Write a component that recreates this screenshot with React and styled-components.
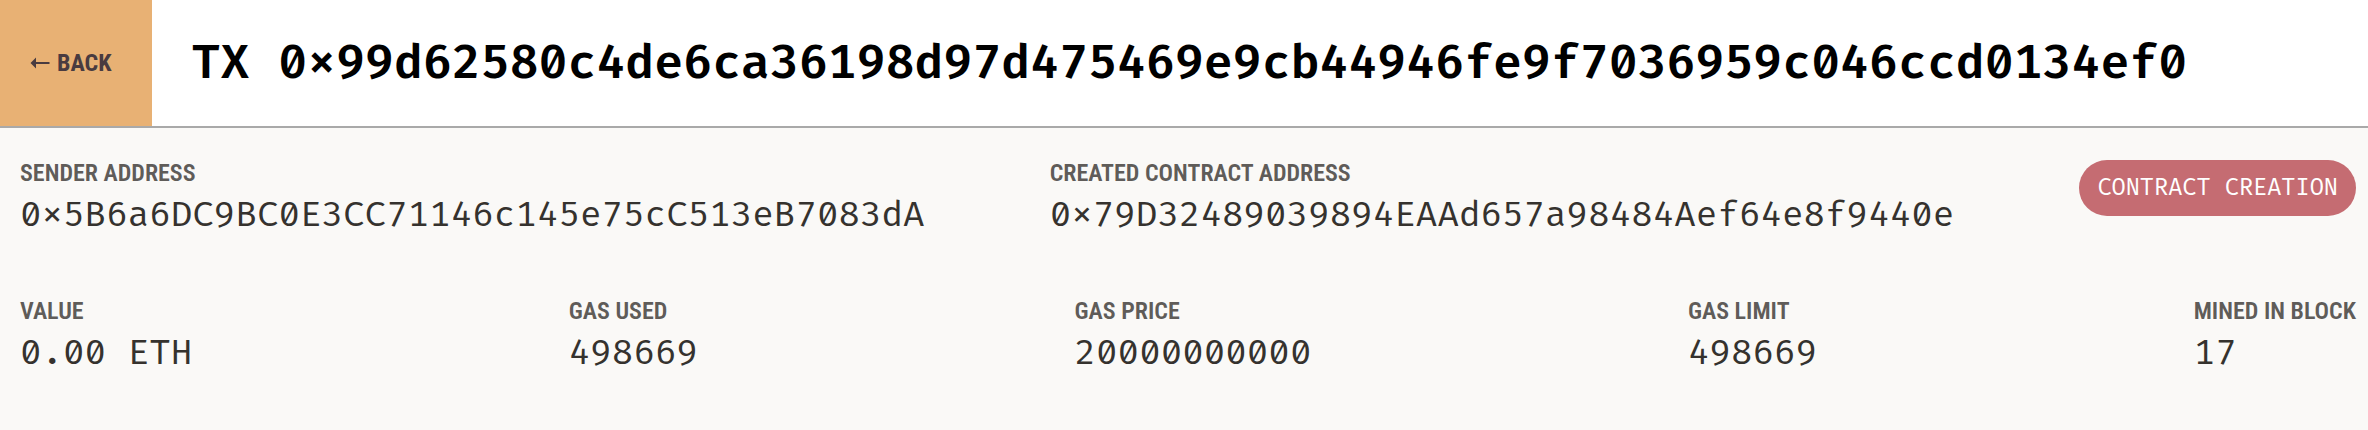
import React from "react";
import styled, { createGlobalStyle } from "styled-components";

const mono = `"Fira Code", "Liberation Mono", monospace`;
const condensed = `"Roboto Condensed", "Liberation Sans Narrow", Roboto, sans-serif`;

const GlobalStyle = createGlobalStyle`
  *, *::before, *::after { box-sizing: border-box; }
  body {
    margin: 0;
    min-height: 100vh;
    background: #faf9f7;
    color: #35322e;
    font-family: ${mono};
  }
`;

const Header = styled.header`
  display: flex;
  align-items: stretch;
  background: #ffffff;
  border-bottom: 2px solid #a9a9a9;
`;

const BackButton = styled.button`
  display: flex;
  align-items: center;
  gap: 7px;
  padding: 0 40px 0 30px;
  border: 0;
  background: #e8b174;
  color: #493b40;
  font: bold 24px/32px ${condensed};
  text-transform: uppercase;
  cursor: pointer;
`;

const Title = styled.h1`
  margin: 0;
  padding: 32px 40px 30px;
  color: #000000;
  font: 600 47px/64px ${mono};
  white-space: nowrap;
`;

const Details = styled.main`
  display: flex;
  flex-direction: column;
  gap: 60px;
  padding: 32px 12px 32px 20px;
`;

const Row = styled.dl`
  display: flex;
  justify-content: space-between;
  align-items: flex-start;
  margin: 0;
`;

const Field = styled.div`
  display: flex;
  flex-direction: column;
  gap: 8px;
`;

const Label = styled.dt`
  color: #5f5c59;
  font: 600 24px/26px ${condensed};
  text-transform: uppercase;
  white-space: nowrap;
`;

const Value = styled.dd`
  margin: 0;
  font-size: 35px;
  line-height: 44px;
  white-space: nowrap;
`;

const AddressRow = styled.div`
  display: flex;
  justify-content: space-between;
  align-items: flex-start;
`;

const AddressField = styled(Field).attrs({ as: "dl" })`
  margin: 0;
`;

const Badge = styled.span`
  padding: 12px 18px;
  border-radius: 28px;
  background: #c56c72;
  color: #ffffff;
  font-size: 23px;
  line-height: 32px;
  text-transform: uppercase;
  white-space: nowrap;
`;

const ArrowIcon = () => (
  <svg width="20" height="12" viewBox="0 0 20 12" fill="currentColor" aria-hidden="true">
    <path d="M0.5 6 L6 0.5 V5 H19.5 V7 H6 V11.5 Z" />
  </svg>
);

const addresses = [
  ["Sender Address", "0x5B6a6DC9BC0E3CC71146c145e75cC513eB7083dA"],
  ["Created Contract Address", "0x79D32489039894EAAd657a98484Aef64e8f9440e"],
];

const stats = [
  ["Value", "0.00 ETH"],
  ["Gas Used", "498669"],
  ["Gas Price", "20000000000"],
  ["Gas Limit", "498669"],
  ["Mined in Block", "17"],
];

export default function App() {
  return (
    <>
      <GlobalStyle />
      <Header>
        <BackButton type="button">
          <ArrowIcon />
          Back
        </BackButton>
        <Title>TX 0x99d62580c4de6ca36198d97d475469e9cb44946fe9f7036959c046ccd0134ef0</Title>
      </Header>
      <Details>
        <AddressRow>
          {addresses.map(([label, value]) => (
            <AddressField key={label}>
              <Label>{label}</Label>
              <Value>{value}</Value>
            </AddressField>
          ))}
          <Badge>Contract Creation</Badge>
        </AddressRow>
        <Row>
          {stats.map(([label, value]) => (
            <Field key={label}>
              <Label>{label}</Label>
              <Value>{value}</Value>
            </Field>
          ))}
        </Row>
      </Details>
    </>
  );
}
